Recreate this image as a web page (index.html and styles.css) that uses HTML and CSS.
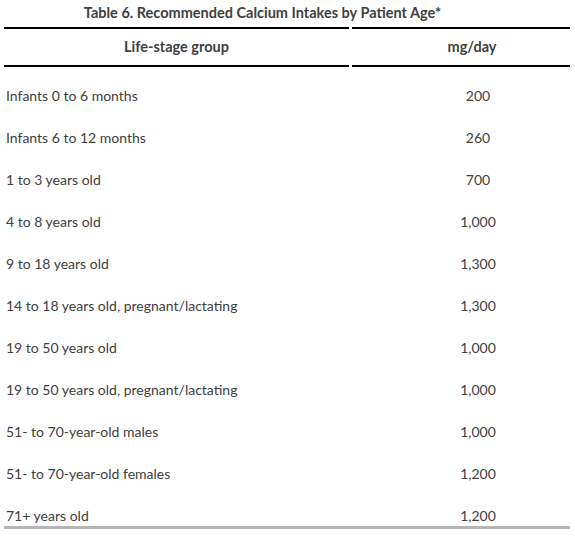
FILE: index.html
```html
<!DOCTYPE html>
<html lang="en">
  <head>
    <meta charset="UTF-8" />
    <meta name="viewport" content="width=device-width, initial-scale=1.0" />
    <title>Recommended Calcium Intakes</title>
    <link rel="stylesheet" href="styles.css">
  </head>
  <body>
    <div class="table-wrap">
      <div class="table-title">Table 6. Recommended Calcium Intakes by Patient Age*</div>
      <div class="calcium-table">
        <div class="head group">Life-stage group</div>
        <div class="head amount">mg/day</div>

        <div class="cell group">Infants 0 to 6 months</div>
        <div class="cell amount">200</div>

        <div class="cell group">Infants 6 to 12 months</div>
        <div class="cell amount">260</div>

        <div class="cell group">1 to 3 years old</div>
        <div class="cell amount">700</div>

        <div class="cell group">4 to 8 years old</div>
        <div class="cell amount">1,000</div>

        <div class="cell group">9 to 18 years old</div>
        <div class="cell amount">1,300</div>

        <div class="cell group">14 to 18 years old, pregnant/lactating</div>
        <div class="cell amount">1,300</div>

        <div class="cell group">19 to 50 years old</div>
        <div class="cell amount">1,000</div>

        <div class="cell group">19 to 50 years old, pregnant/lactating</div>
        <div class="cell amount">1,000</div>

        <div class="cell group">51- to 70-year-old males</div>
        <div class="cell amount">1,000</div>

        <div class="cell group">51- to 70-year-old females</div>
        <div class="cell amount">1,200</div>

        <div class="cell group last">71+ years old</div>
        <div class="cell amount last">1,200</div>
      </div>
    </div>
  </body>
</html>
```

FILE: styles.css
```css
body {
  font-family: Lato, "Open Sans", sans-serif;
  margin: 0;
  padding: 0;
  background-color: #ffffff;
  color: #404040;
  font-size: 14px;
}

.table-wrap {
  width: 575px;
}

.table-title {
  font-weight: bold;
  font-size: 14.5px;
  text-align: center;
  height: 27px;
  line-height: 26px;
  padding-right: 50px;
}

.calcium-table {
  display: grid;
  grid-template-columns: 345px 218px;
  column-gap: 3px;
  margin-left: 4px;
}

.head {
  font-weight: bold;
  font-size: 14.5px;
  text-align: center;
  border-top: 2px solid #000;
  border-bottom: 2px solid #000;
  height: 36px;
  line-height: 36px;
}

.head.amount {
  padding-left: 22px;
}

.cell {
  height: 42px;
  padding-top: 18px;
  line-height: 22px;
  box-sizing: border-box;
}

.cell.group {
  padding-left: 2px;
}

.cell.amount {
  text-align: center;
  padding-left: 34px;
}

.cell.last {
  border-bottom: 3px solid #b5b5b5;
}

.cell.group.last {
  margin-right: -3px;
}
```
